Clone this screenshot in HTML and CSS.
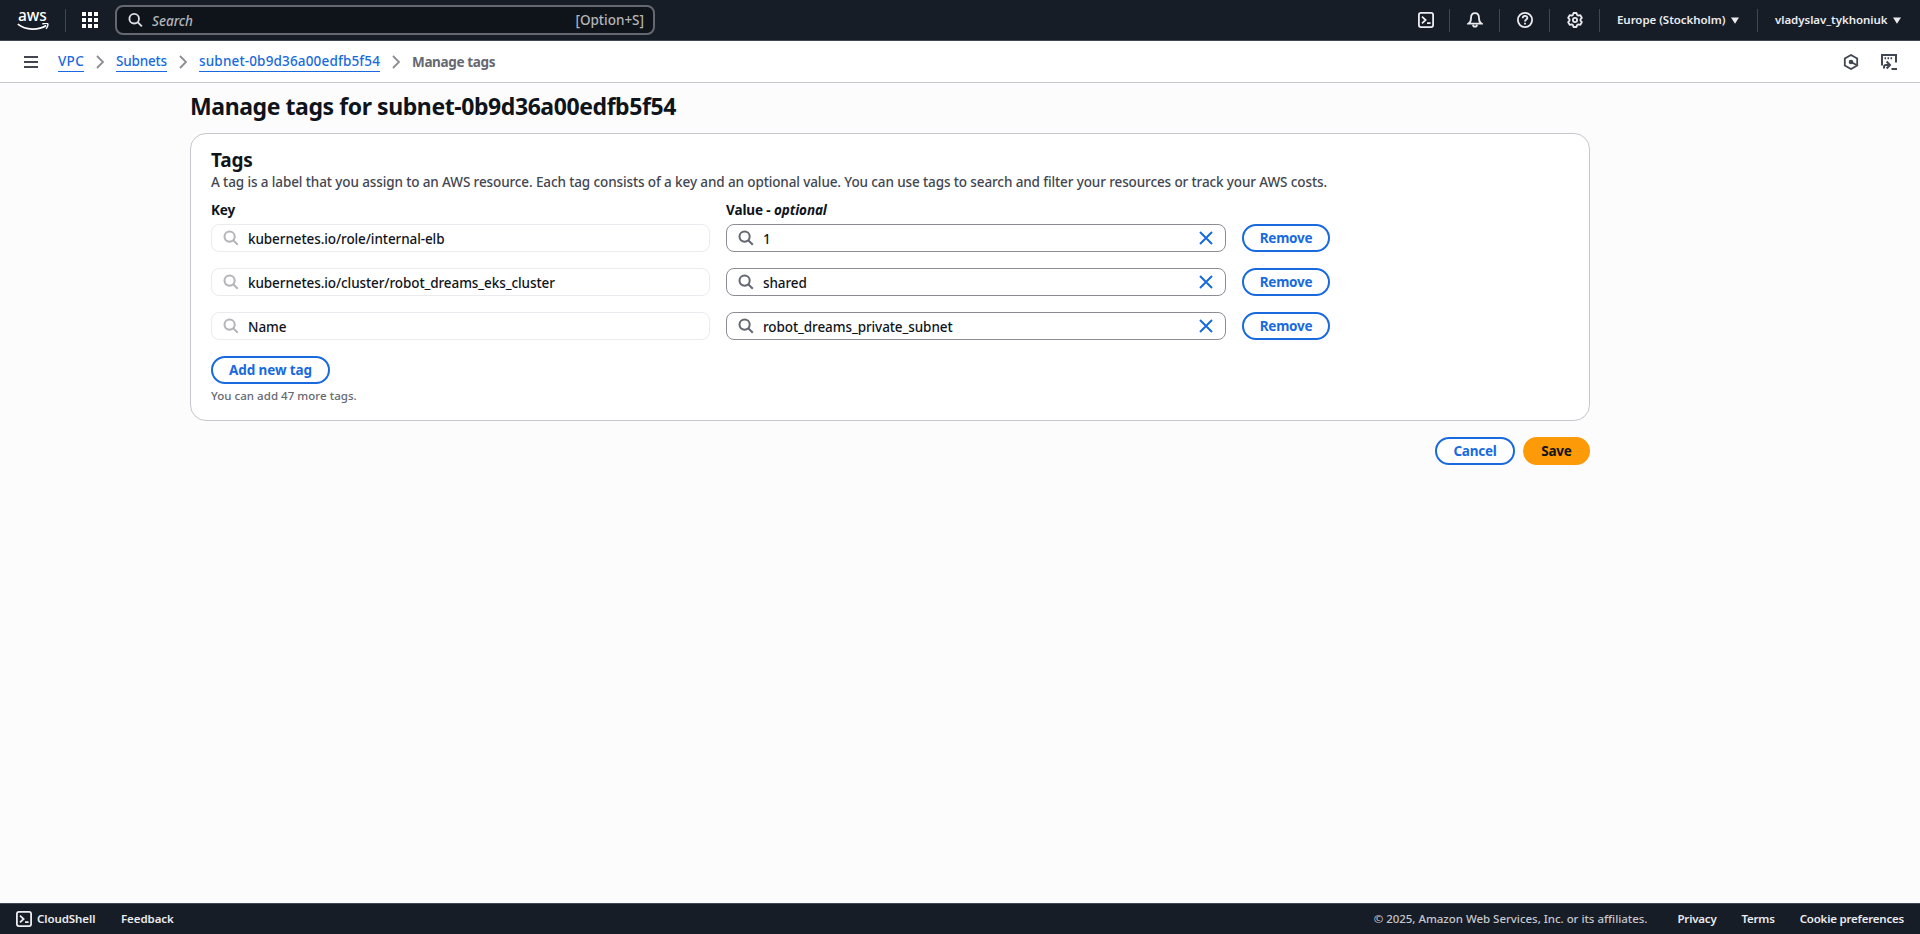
FILE: index.html
```html
<!DOCTYPE html>
<html lang="en">
<head>
<meta charset="utf-8">
<title>Manage tags</title>
<link rel="stylesheet" href="styles.css">
</head>
<body>
<svg width="0" height="0" class="defs">
  <symbol id="search" viewBox="0 0 16 16"><g fill="none" stroke="currentColor" stroke-width="2"><circle cx="6.6" cy="6.6" r="5.1"/><path d="M10.2 10.2l4.6 4.6"/></g></symbol>
  <symbol id="close" viewBox="0 0 16 16"><path d="M2 2l12 12M14 2L2 14" fill="none" stroke="currentColor" stroke-width="2"/></symbol>
  <symbol id="chevron" viewBox="0 0 8 14"><path d="M1 1l6 6-6 6" fill="none" stroke="currentColor" stroke-width="1.8"/></symbol>
  <symbol id="shell" viewBox="0 0 16 16"><g fill="none" stroke="currentColor" stroke-width="1.8"><rect x=".9" y=".9" width="14.2" height="14.2" rx="2"/><path d="M4 4.6L7.6 8 4 11.4M9 11.2h3.6"/></g></symbol>
  <symbol id="caret" viewBox="0 0 8 7"><path d="M0 .5h8L4 6.8z" fill="currentColor"/></symbol>
</svg>
<header class="topbar">
  <div class="logo"><span>aws</span><svg width="32" height="8" viewBox="0 12 32 8"><path d="M.8 13.2c8.200 6.400 20.800 6.200 28.400 1.300" fill="none" stroke="#fff" stroke-width="1.700"/><path d="M25.400 13c2-1 4.700-.9 5.300-.3s-.1 3.700-1.800 5.100" fill="none" stroke="#fff" stroke-width="1.400"/></svg></div>
  <i class="sep sep-logo"></i>
  <svg class="apps" viewBox="0 0 16 16" fill="#fff"><path d="M0 0h4v4H0zM6 0h4v4H6zM12 0h4v4h-4zM0 6h4v4H0zM6 6h4v4H6zM12 6h4v4h-4zM0 12h4v4H0zM6 12h4v4H6zM12 12h4v4h-4z"/></svg>
  <div class="searchbox"><svg class="ic16"><use href="#search"/></svg><span class="t placeholder">Search</span><span class="t shortcut">[Option+S]</span></div>
  <nav class="tools">
    <a class="tool tool-shell"><svg class="ic16"><use href="#shell"/></svg></a><i class="sep"></i>
    <a class="tool"><svg class="ic16" viewBox="0 0 16 16" fill="none" stroke="currentColor" stroke-width="1.800"><path d="M1.600 11.600c1.800-1.200 2.400-2.600 2.400-5.400C4 3 5.600 1.200 8 1.200s4 1.800 4 5c0 2.800.6 4.200 2.400 5.400z"/><path d="M6 12.600c.2 2.700 3.800 2.700 4 0"/></svg></a><i class="sep"></i>
    <a class="tool"><svg class="ic16" viewBox="0 0 16 16" fill="none" stroke="currentColor" stroke-width="1.800"><circle cx="8" cy="8" r="7.100"/><path d="M5.700 6.300c.1-3.300 4.900-3 4.600-.2C10.100 7.500 8 7.500 8 9.600M8 10.700v1.700"/></svg></a><i class="sep"></i>
    <a class="tool"><svg class="ic16" viewBox="0 0 16 16" fill="none" stroke="currentColor" stroke-width="1.800" stroke-linejoin="round"><path d="M6.500 1h3l.6 1.900 1.200.7 2-.4 1.500 2.600L13.500 7.300v1.400l1.300 1.500-1.500 2.600-2-.4-1.200.7-.6 1.900h-3l-.6-1.900-1.200-.7-2 .4-1.500-2.600 1.300-1.500V7.300L1.200 5.800l1.500-2.600 2 .4 1.200-.7z"/><circle cx="8" cy="8" r="2.100"/></svg></a><i class="sep"></i>
  </nav>
  <div class="menu region"><span class="t">Europe (Stockholm)</span><svg class="caret"><use href="#caret"/></svg></div>
  <i class="sep"></i>
  <div class="menu user"><span class="t">vladyslav_tykhoniuk</span><svg class="caret"><use href="#caret"/></svg></div>
</header>
<nav class="crumbs">
  <svg class="burger" viewBox="0 0 14 12"><path d="M0 1h14M0 6h14M0 11h14" stroke="#424650" stroke-width="2"/></svg>
  <a class="t c1">VPC</a><svg class="chev"><use href="#chevron"/></svg>
  <a class="t c2">Subnets</a><svg class="chev"><use href="#chevron"/></svg>
  <a class="t c3">subnet-0b9d36a00edfb5f54</a><svg class="chev"><use href="#chevron"/></svg>
  <b class="t c4">Manage tags</b>
  <div class="side">
    <svg class="ic16" viewBox="0 0 16 16" fill="none" stroke="currentColor" stroke-width="1.800"><path d="M8 1l6.200 3.500v7L8 15l-6.200-3.500v-7z"/><circle cx="8" cy="8" r="2.300" fill="currentColor" stroke="none"/><path d="M8 8l5.500 3"/></svg>
    <svg class="ic16" viewBox="0 0 16 16" fill="none" stroke="currentColor" stroke-width="2"><path d="M1 11.500V1h14v7.500"/><path d="M3.500 4.200h1.600M6.500 4.200h1.600M9.500 4.200h1.600M10.500 15H16M3 14.500V13c0-1.300.6-2 2-2h3.500M5.600 7.500L9 11l-3.400 3.500"/></svg>
  </div>
</nav>
<main class="page">
  <h1><span class="t title">Manage tags for subnet-0b9d36a00edfb5f54</span></h1>
  <section class="card">
    <h2><span class="t head">Tags</span></h2>
    <p class="desc"><span class="t">A tag is a label that you assign to an AWS resource. Each tag consists of a key and an optional value. You can use tags to search and filter your resources or track your AWS costs.</span></p>
    <div class="labels"><b class="t key">Key</b><b class="t val">Value - <i>optional</i></b></div>
    <div class="rows">
      <div class="row"><div class="field off"><svg class="ic16"><use href="#search"/></svg><span class="t">kubernetes.io/role/internal-elb</span></div><div class="field"><svg class="ic16"><use href="#search"/></svg><span class="t">1</span><svg class="x"><use href="#close"/></svg></div><button class="btn remove"><span class="t">Remove</span></button></div>
      <div class="row"><div class="field off"><svg class="ic16"><use href="#search"/></svg><span class="t">kubernetes.io/cluster/robot_dreams_eks_cluster</span></div><div class="field"><svg class="ic16"><use href="#search"/></svg><span class="t">shared</span><svg class="x"><use href="#close"/></svg></div><button class="btn remove"><span class="t">Remove</span></button></div>
      <div class="row"><div class="field off"><svg class="ic16"><use href="#search"/></svg><span class="t">Name</span></div><div class="field"><svg class="ic16"><use href="#search"/></svg><span class="t">robot_dreams_private_subnet</span><svg class="x"><use href="#close"/></svg></div><button class="btn remove"><span class="t">Remove</span></button></div>
    </div>
    <button class="btn add"><span class="t">Add new tag</span></button>
    <div class="hint"><span class="t">You can add 47 more tags.</span></div>
  </section>
  <div class="actions"><button class="btn cancel"><span class="t">Cancel</span></button><button class="btn save"><span class="t">Save</span></button></div>
</main>
<footer class="bottom">
  <svg class="ic16"><use href="#shell"/></svg><span class="t f1">CloudShell</span><span class="t f2">Feedback</span>
  <span class="t f3">© 2025, Amazon Web Services, Inc. or its affiliates.</span><span class="t f4">Privacy</span><span class="t f5">Terms</span><span class="t f6">Cookie preferences</span>
</footer>
</body>
</html>
```
FILE: styles.css
```css
* { box-sizing: border-box; }
body { margin: 0; height: 934px; display: flex; flex-direction: column; background: #fcfcfd; color: #0f141a; font: 500 13.5px/20px "Noto Sans", sans-serif; overflow: hidden; }
b, h1, h2 { font-weight: 700; }
.defs { position: absolute; }
svg { display: block; flex: none; }
.t { white-space: nowrap; }
.ic16 { width: 16px; height: 16px; }
.topbar { height: 41px; flex: none; display: flex; align-items: center; background: #161d26; border-bottom: 1px solid #424650; color: #ebebf0; padding-left: 17px; padding-right: 19px; }
.logo { width: 32px; height: 28px; }
.logo span { display: block; font: 500 15.5px/18px "Noto Sans", sans-serif; letter-spacing: -.1px; color: #fff; padding-left: 1px; }
.logo svg { margin-top: -1px; }
.sep { width: 1px; height: 23px; background: #424650; flex: none; }
.sep-logo { margin: 0 16px; }
.apps { width: 16px; height: 16px; }
.searchbox { width: 540px; height: 30px; margin-left: 17px; border: 2px solid #656871; border-radius: 8px; background: #0f141a; display: flex; align-items: center; padding: 0 9px 0 11px; }
.searchbox svg { color: #dedee3; width: 15px; }
.placeholder { font-style: italic; color: #b4b4bb; margin-left: 9px; padding-top: 2px; }
.shortcut { margin-left: auto; color: #b4b4bb; }
.tools { display: flex; align-items: center; margin-left: auto; }
.tool { width: 49px; display: flex; justify-content: center; }
.tool-shell { padding-left: 3px; }
.menu { display: flex; align-items: center; justify-content: space-between; font-weight: 600; font-size: 11.5px; letter-spacing: -.05px; }
.region { width: 122px; margin: 0 18px 0 17px; }
.user { width: 126px; margin-left: 17px; }
.caret { width: 8px; height: 7px; }
.crumbs { height: 42px; flex: none; display: flex; align-items: center; background: #fff; border-bottom: 1px solid #c6c6cd; padding: 0 23px 0 24px; }
.burger { width: 14px; height: 12px; margin-right: 20px; }
.crumbs a { color: #186ade; border-bottom: 1px solid #186ade; line-height: 19px; margin-top: 1px; }
.chev { width: 8px; height: 14px; color: #8c8c94; margin: 0 12px; }
.c1 { width: 26px; letter-spacing: .3px; }
.c2 { width: 51px; letter-spacing: -.17px; }
.c3 { width: 181px; letter-spacing: .16px; }
.c4 { color: #656871; letter-spacing: -.35px; margin-top: 1px; }
.side { margin-left: auto; display: flex; gap: 22px; color: #424650; }
.page { width: 1400px; margin-left: 190px; flex: 1; }
h1 { margin: 9px 0 12px; font-size: 23px; line-height: 29px; letter-spacing: -.42px; }
.card { height: 288px; background: #fff; border: 1px solid #c6c6cd; border-radius: 16px; padding: 15px 20px; }
h2 { margin: 0; font-size: 19px; line-height: 23px; letter-spacing: -.2px; }
.desc { margin: 0; color: #424650; letter-spacing: -.114px; }
.labels { display: flex; margin-top: 8px; letter-spacing: -.1px; }
.key { width: 515px; }
.rows { display: grid; gap: 16px; margin-top: 4px; }
.row { display: flex; gap: 16px; }
.field { width: 500px; height: 28px; border: 1px solid #8c8c94; border-radius: 8px; display: flex; align-items: center; padding: 0 11px; gap: 9px; background: #fff; letter-spacing: -.09px; }
.field .ic16 { color: #656871; }
.field .t { padding-top: 2px; }
.off { width: 499px; border-color: #ebebf0; }
.field.off .ic16 { color: #b4b4bb; }
.x { width: 16px; height: 16px; color: #186ade; margin-left: auto; }
.btn { height: 28px; border: 2px solid #186ade; border-radius: 20px; background: #fff; color: #186ade; font: 700 13.5px/20px "Noto Sans", sans-serif; letter-spacing: -.25px; padding: 0; text-align: center; }
.remove { width: 88px; }
.add { width: 119px; margin-top: 16px; display: block; letter-spacing: -.1px; }
.hint { font-size: 11.5px; line-height: 16px; color: #656871; margin-top: 4px; letter-spacing: .04px; }
.actions { display: flex; justify-content: flex-end; gap: 8px; margin-top: 16px; }
.cancel { width: 80px; }
.save { width: 67px; background: #fd9a08; border-color: #fd9a08; color: #0f141a; }
.bottom { height: 31px; flex: none; background: #161d26; border-top: 1px solid #424650; display: flex; align-items: center; color: #ebebf0; font-size: 11.5px; font-weight: 600; letter-spacing: -.08px; padding: 0 16px; }
.f1 { width: 59px; margin-left: 5px; }
.f2 { margin-left: 25px; }
.f3 { margin-left: auto; color: #c6c6cd; font-weight: 500; letter-spacing: -.03px; }
.f4 { margin-left: 30px; }
.f5, .f6 { margin-left: 25px; }
.f4, .f5, .f6 { letter-spacing: -.2px; }
```
